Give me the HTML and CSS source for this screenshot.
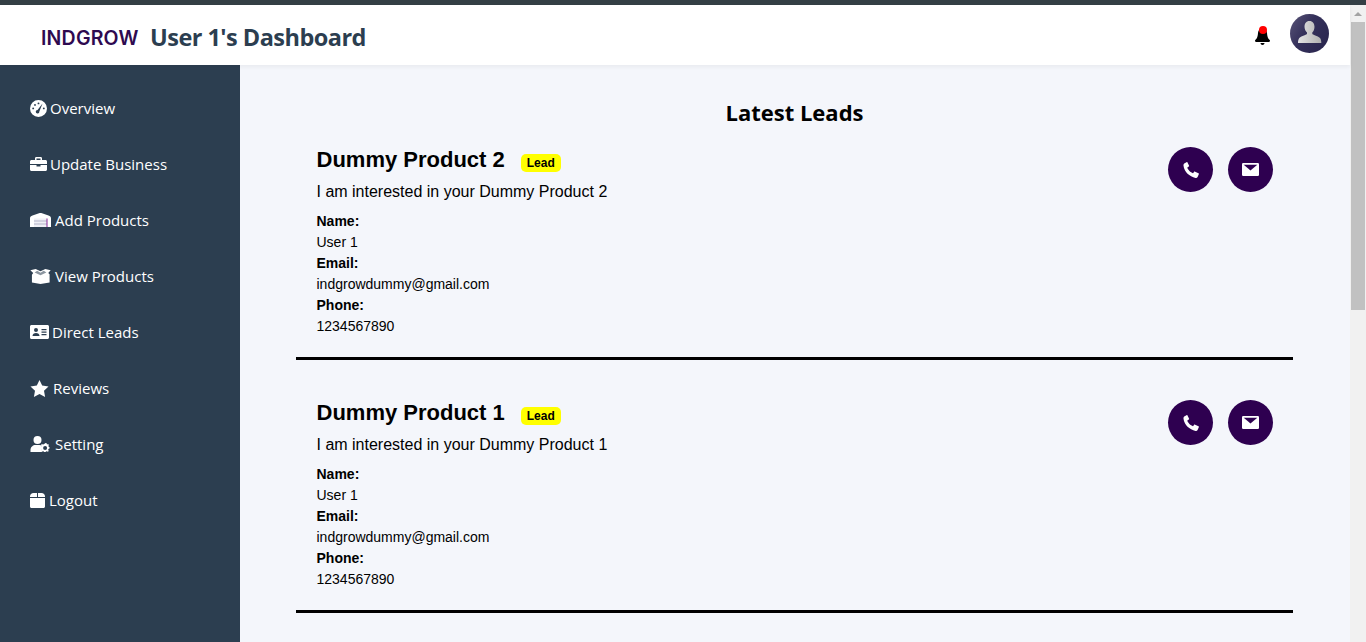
FILE: index.html
```html
<!DOCTYPE html>
<html lang="en">
<head>
<meta charset="utf-8">
<title>User 1's Dashboard</title>
<link rel="stylesheet" href="styles.css">
</head>
<body>
<div class="topline"></div>
<div class="window">
  <div class="app">
    <header class="header">
      <div class="brand">
        <span class="logo">INDGROW</span>
        <h1 class="title">User 1's Dashboard</h1>
      </div>
      <div class="header-right">
        <span class="bell">
          <svg class="bell-icon" viewBox="0 0 15 18"><path d="M7.500 18c1 0 2-.8 2-2h-4c0 1.200 1 2 2 2zM14.700 13c-1.300-1.300-2.400-2.500-2.700-7C11.800 3 10 1 7.500 1S3.200 3 3 6c-.3 4.500-1.400 5.700-2.700 7-.5.500-.3 2 .7 2h13c1 0 1.200-1.500.7-2z"/></svg>
          <span class="bell-dot"></span>
        </span>
        <span class="avatar">
          <svg viewBox="0 0 39 39"><defs><linearGradient id="ag" x1="0" y1="0" x2="1" y2="0.6"><stop offset="0" stop-color="#5a5578"/><stop offset="0.5" stop-color="#34305a"/><stop offset="1" stop-color="#2b2750"/></linearGradient><linearGradient id="pg" x1="0" y1="0" x2="1" y2="0"><stop offset="0" stop-color="#e4e4e4"/><stop offset="1" stop-color="#b0b0b0"/></linearGradient></defs><circle cx="19.500" cy="19.500" r="19.500" fill="url(#ag)"/><path d="M19.500 7c3.200 0 5 2.600 5 5.800 0 2.700-1 4.500-2.200 5.700v1.300c0 1 5.500 2.200 7.700 4.200 1 1 1.300 3.200 1.300 5H8c0-1.800.4-4 1.300-5 2.200-2 7.700-3.200 7.700-4.200v-1.300c-1.200-1.200-2.500-3-2.500-5.700 0-3.200 1.700-5.800 4.800-5.800z" fill="url(#pg)"/></svg>
        </span>
      </div>
    </header>
    <div class="body">
      <nav class="sidebar">
        <a class="nav-item gap-3"><svg class="ic ic-16" viewBox="0 0 16 16"><path fill-rule="evenodd" d="M8 0a8 8 0 1 1 0 16A8 8 0 0 1 8 0zm3.800 3.400L7.100 9.300a1.700 1.700 0 1 0 1.700 1.500zM8 2.300a.9.900 0 1 0 0 1.800.9.900 0 0 0 0-1.800zM4.700 3.700a.9.900 0 1 0 0 1.800.9.900 0 0 0 0-1.800zM3 7a.9.900 0 1 0 0 1.800A.9.900 0 0 0 3 7zm10 0a.9.900 0 1 0 0 1.800.9.900 0 0 0 0-1.800z"/></svg><span>Overview</span></a>
        <a class="nav-item gap-3"><svg class="ic ic-17" viewBox="0 0 17 14"><path d="M5 3V1.300C5 .6 5.600 0 6.300 0h4.400c.7 0 1.300.6 1.300 1.300V3h3.500c.8 0 1.500.7 1.500 1.500V7H0V4.500C0 3.700.7 3 1.500 3zm1.500 0h4V1.500h-4zM0 8h6.500v1.500h4V8H17v4.500c0 .8-.7 1.500-1.500 1.500h-14C.7 14 0 13.300 0 12.500z"/></svg><span>Update Business</span></a>
        <a class="nav-item gap-4"><svg class="ic ic-wh" viewBox="0 0 21 14"><path d="M0 14V5.500C0 3.500 1 3 2.500 2.400L9 .3c1-.4 2-.4 3 0l6.500 2.100C20 3 21 3.500 21 5.500V14z"/><rect class="door" x="4" y="5.500" width="13" height="8.500"/><path class="slat" d="M4 8h13M4 11h13"/><path class="edge" d="M17 5.500V14"/></svg><span>Add Products</span></a>
        <a class="nav-item gap-4"><svg class="ic ic-box" viewBox="0 0 19 14"><path d="M0 1.200 5 0l4.500 2L14 0l5 1.200-2.300 2.600L18 5v7.500L9.500 14 1.500 12.500V5.300l1.200-1.500z"/><path class="flap" d="M4 3.200l2.500-1.600 3 2 3-2L15 3.200l-5.500 2.600z"/></svg><span>View Products</span></a>
        <a class="nav-item gap-3"><svg class="ic ic-19" viewBox="0 0 19 14"><path fill-rule="evenodd" d="M1.500 0h16c.8 0 1.500.7 1.500 1.500v11c0 .8-.7 1.500-1.500 1.500h-16C.7 14 0 13.300 0 12.500v-11C0 .7.7 0 1.500 0zM6 3a2 2 0 1 0 0 4 2 2 0 0 0 0-4zM2.500 11h7c0-1.800-1.500-3-3.500-3s-3.500 1.200-3.500 3zM11.500 4v1.200h5V4zm0 2.500v1.200h5V6.500zm0 2.500v1.200h5V9z"/></svg><span>Direct Leads</span></a>
        <a class="nav-item gap-4"><svg class="ic ic-18" viewBox="0 0 18 17"><path d="M9 0l2.700 5.600 6.300.9-4.500 4.300 1.100 6.200L9 14l-5.600 3 1.100-6.200L0 6.500l6.300-.9z"/></svg><span>Reviews</span></a>
        <a class="nav-item gap-4"><svg class="ic ic-20" viewBox="0 0 20 16"><circle cx="7" cy="4" r="4"/><path d="M0 16v-2c0-3 2.500-5 5-5h4c1 0 1.700.2 2.400.6-.5 1.600 0 3.200 0 6.400z"/><path fill-rule="evenodd" d="M15 7l1.200.3.300 1.100 1.100-.3.800 1-.6 1 .7.900h.5v1.600l-1.100.3-.2 1 .6 1-1 .9-1-.6-.9.4-.4 1h-1.300l-.3-1-1-.4-1 .6-.9-.9.600-1-.4-1-1-.3v-1.400l1-.3.400-1-.6-1 .9-.9 1 .6 1-.4zm-.4 3a2 2 0 1 0 0 4 2 2 0 0 0 0-4z"/></svg><span>Setting</span></a>
        <a class="nav-item gap-4"><svg class="ic ic-15" viewBox="0 0 15 15"><path d="M3.500 0h3.500v4H0V3.500C0 1.500 1.500 0 3.500 0zM8 0h3.500C13.500 0 15 1.500 15 3.500V4H8zM0 5h15v8.500c0 .8-.7 1.500-1.500 1.500h-12C.7 15 0 14.300 0 13.500z"/></svg><span>Logout</span></a>
      </nav>
      <main class="main">
        <h2 class="heading">Latest Leads</h2>
        <article class="lead">
          <div class="lead-info">
            <div class="lead-head"><h3 class="product">Dummy Product 2</h3><span class="badge">Lead</span></div>
            <p class="message">I am interested in your Dummy Product 2</p>
            <dl class="details">
              <dt>Name:</dt><dd>User 1</dd>
              <dt>Email:</dt><dd>indgrowdummy@gmail.com</dd>
              <dt>Phone:</dt><dd>1234567890</dd>
            </dl>
          </div>
          <div class="actions">
            <a class="action"><svg class="phone" viewBox="0 0 16 16"><path d="M1.200 1.600 3.500.2c.4-.2.800-.1 1 .3l1.500 3c.2.400.1.800-.2 1L4.300 5.600c.5 2.300 3.300 5 5.700 5.600l1-1.300c.3-.3.700-.4 1.100-.2l3.400 1.500c.4.200.5.600.3 1l-1.200 2.700c-.4.800-1.200 1.200-2 1C6.500 14.800 1.300 9.800.5 3.800c-.1-.9.100-1.700.7-2.200z"/></svg></a>
            <a class="action"><svg class="mail" viewBox="0 0 17 13"><rect class="mail-body" width="17" height="13" rx="1.200"/><path class="mail-flap" d="M1.700 1.800h13.600L8.500 7.400z"/></svg></a>
          </div>
        </article>
        <article class="lead">
          <div class="lead-info">
            <div class="lead-head"><h3 class="product">Dummy Product 1</h3><span class="badge">Lead</span></div>
            <p class="message">I am interested in your Dummy Product 1</p>
            <dl class="details">
              <dt>Name:</dt><dd>User 1</dd>
              <dt>Email:</dt><dd>indgrowdummy@gmail.com</dd>
              <dt>Phone:</dt><dd>1234567890</dd>
            </dl>
          </div>
          <div class="actions">
            <a class="action"><svg class="phone" viewBox="0 0 16 16"><path d="M1.200 1.600 3.500.2c.4-.2.800-.1 1 .3l1.500 3c.2.400.1.800-.2 1L4.300 5.600c.5 2.300 3.300 5 5.700 5.600l1-1.300c.3-.3.700-.4 1.100-.2l3.400 1.500c.4.200.5.600.3 1l-1.200 2.700c-.4.800-1.200 1.200-2 1C6.500 14.800 1.300 9.800.5 3.800c-.1-.9.100-1.700.7-2.200z"/></svg></a>
            <a class="action"><svg class="mail" viewBox="0 0 17 13"><rect class="mail-body" width="17" height="13" rx="1.200"/><path class="mail-flap" d="M1.700 1.800h13.600L8.500 7.400z"/></svg></a>
          </div>
        </article>
      </main>
    </div>
  </div>
  <div class="scrollbar">
    <div class="scroll-btn"><span class="scroll-arrow"></span></div>
    <div class="scroll-thumb"></div>
  </div>
</div>
</body>
</html>
```
FILE: styles.css
```css
* { box-sizing: border-box; }
html, body { margin: 0; height: 642px; overflow: hidden; }
body { font-family: "Open Sans", "Noto Sans", sans-serif; background: #f4f6fb; display: flex; flex-direction: column; }
.topline { height: 5px; background: #343f45; flex: none; }
.window { flex: 1; display: flex; min-height: 0; }
.app { flex: 1; display: flex; flex-direction: column; min-width: 0; }

.header { height: 60px; flex: none; background: #fff; display: flex; align-items: center; justify-content: space-between; padding: 0 21px 0 41px; box-shadow: 0 2px 4px rgba(0,0,0,.05); position: relative; z-index: 1; }
.brand { display: flex; align-items: center; gap: 11px; padding-top: 4px; }
.logo { font-family: "Inter", sans-serif; font-size: 19.500px; font-weight: 600; color: #2e0a50; width: 98px; letter-spacing: .2px; white-space: nowrap; padding-top: 2px; }
.title { margin: 0; font-size: 23.500px; letter-spacing: -.53px; font-weight: 700; color: #2c3e50; line-height: 32px; }
.header-right { display: flex; align-items: center; gap: 20px; }
.bell { position: relative; display: block; width: 15px; height: 18px; margin-top: 2px; }
.bell-icon { display: block; width: 15px; height: 18px; }
.bell-dot { position: absolute; top: -1px; left: 4px; width: 8px; height: 8px; border-radius: 50%; background: #f00; }
.avatar { display: block; width: 39px; height: 39px; margin-bottom: 4px; }
.avatar svg { display: block; width: 39px; height: 39px; }

.body { flex: 1; display: flex; min-height: 0; }
.sidebar { width: 240px; flex: none; background: #2c3e50; padding-top: 15px; display: flex; flex-direction: column; }
.nav-item { height: 56px; display: flex; align-items: center; padding-left: 30px; color: #fff; font-size: 15px; }
.gap-3 { gap: 3px; }
.gap-4 { gap: 4px; }
.ic { fill: #fff; flex: none; display: block; }
.ic-15 { width: 15px; height: 15px; }
.ic-16 { width: 17px; height: 17px; }
.ic-17 { width: 17px; height: 14px; }
.ic-18 { width: 19px; height: 17px; }
.ic-19 { width: 19px; height: 14px; }
.ic-20 { width: 21px; height: 16px; }
.ic-wh { width: 21px; height: 14px; }
.ic-box { width: 21px; height: 15px; }
.door { fill: #f0f0f6; }
.slat { stroke: #b4b4c8; stroke-width: 1; fill: none; }
.edge { stroke: #8a2a9a; stroke-width: 1; fill: none; }
.flap { fill: #2c3e50; opacity: .55; }

.main { flex: 1; padding: 0 57px 0 56px; min-width: 0; }
.heading { margin: 29px 0 17px; text-align: center; font-size: 22px; line-height: 36px; font-weight: 700; color: #000; }
.lead { padding: 40px 20px 20px 20.500px; border-bottom: 3px solid #000; display: flex; justify-content: space-between; align-items: flex-start; color: #000; font-family: "Liberation Sans", Arial, sans-serif; }
.heading + .lead { padding-top: 0; }
.lead-head { display: flex; align-items: center; gap: 16px; height: 26px; }
.product { margin: 0; font-size: 22px; line-height: 26px; font-weight: 700; }
.badge { background: #ff0; border-radius: 5px; font-size: 12px; font-weight: 700; line-height: 18px; height: 18px; padding: 0 6px; margin-top: 6px; }
.message { margin: 9px 0 0; font-size: 16px; line-height: 20px; }
.details { margin: 9px 0 0; font-size: 14px; line-height: 21px; }
.details dt { font-weight: 700; }
.details dd { margin: 0; }
.actions { display: flex; gap: 15px; }
.action { width: 45px; height: 45px; border-radius: 50%; background: #2e0050; display: flex; align-items: center; justify-content: center; }
.phone { width: 16px; height: 16px; fill: #fff; display: block; }
.mail { width: 17px; height: 13px; display: block; }
.mail-body { fill: #fff; }
.mail-flap { fill: #2e0050; }

.scrollbar { width: 16px; flex: none; background: #f1f1f1; display: flex; flex-direction: column; align-items: center; }
.scroll-btn { height: 17px; width: 100%; display: flex; align-items: center; justify-content: center; }
.scroll-arrow { width: 0; height: 0; border-left: 4px solid transparent; border-right: 4px solid transparent; border-bottom: 4px solid #a3a3a3; }
.scroll-thumb { width: 14px; height: 288px; background: #c1c1c1; }
```
